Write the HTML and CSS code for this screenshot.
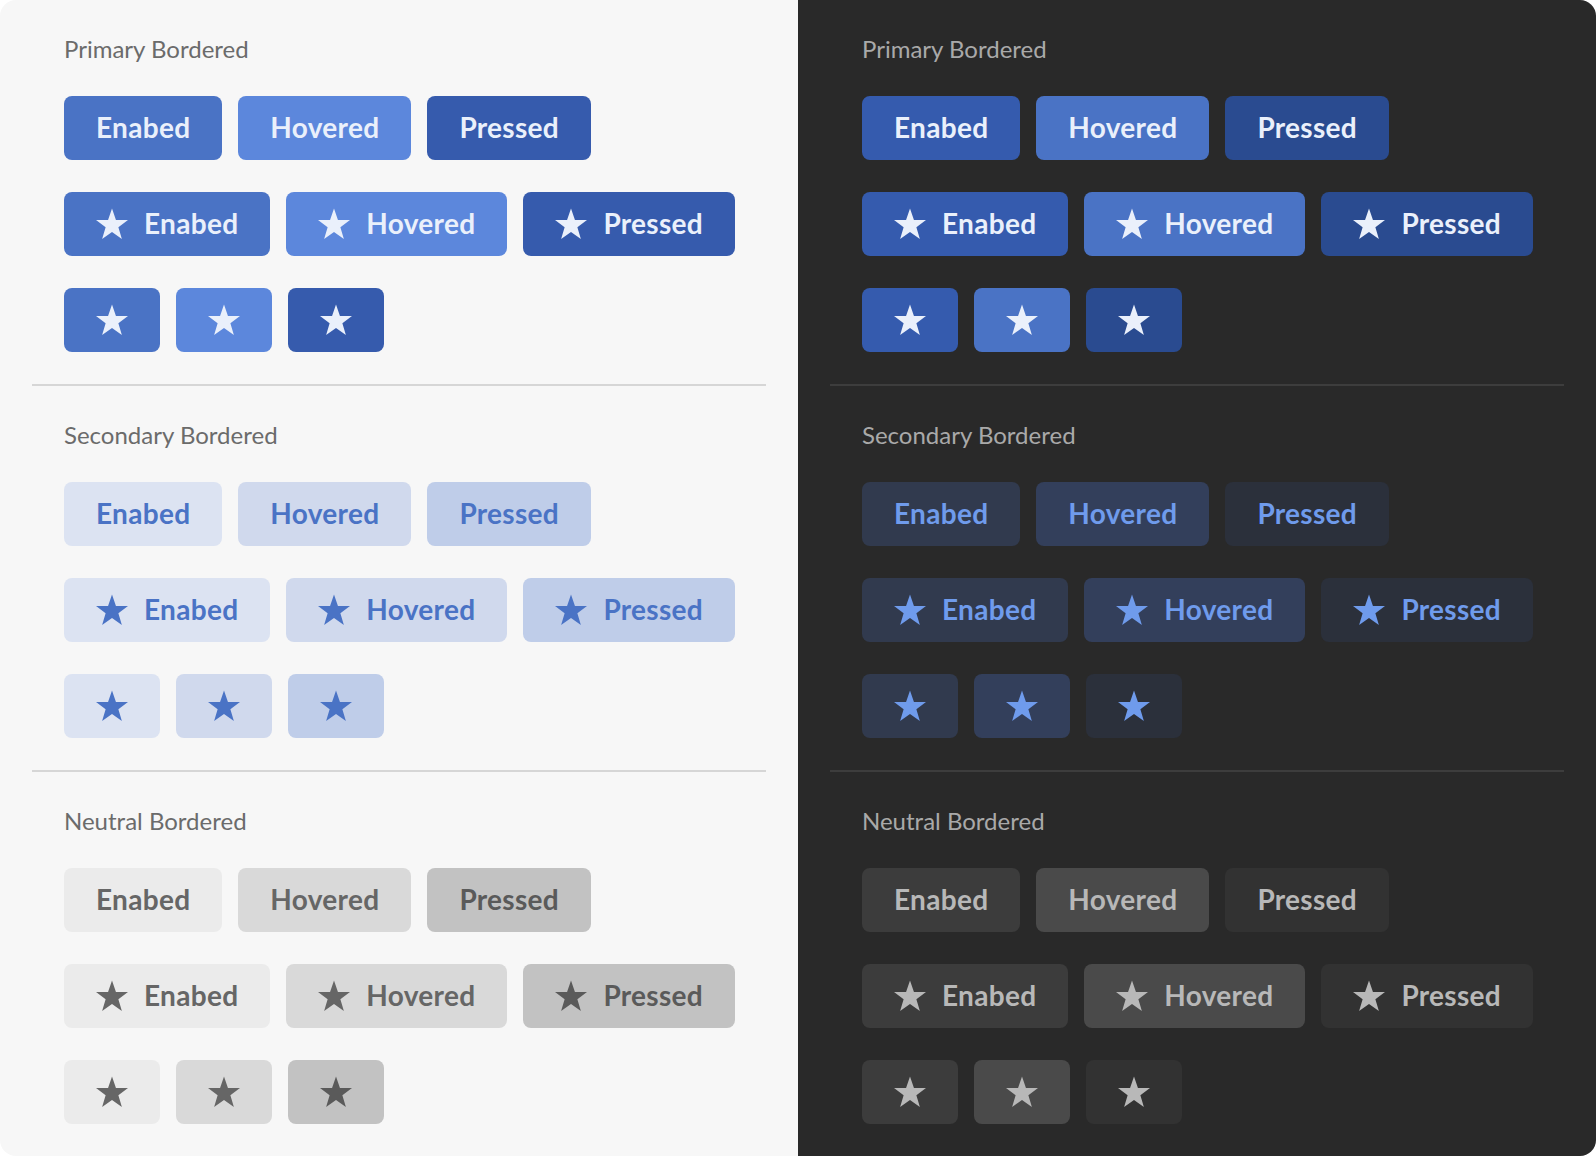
FILE: index.html
```html
<!DOCTYPE html>
<html lang="en">
<head>
  <meta charset="UTF-8" />
  <meta name="viewport" content="width=device-width, initial-scale=1.0"/>
  <title>Bordered Buttons</title>
  <link rel="stylesheet" href="styles.css">
</head>
<body>
  <svg class="sprite" xmlns="http://www.w3.org/2000/svg">
    <symbol id="star" viewBox="0 0 32 32">
      <path d="M16 0.5 L19.94 11.88 L31.98 12.11 L22.37 19.37 L25.88 30.89 L16 24 L6.12 30.89 L9.63 19.37 L0.02 12.11 L12.06 11.88 Z" fill="currentColor"/>
    </symbol>
  </svg>

  <div class="board">
    <!-- light theme -->
    <div class="panel light">
      <div class="section primary">
        <h3>Primary Bordered</h3>
        <div class="row">
          <button class="btn enabled">Enabed</button>
          <button class="btn hovered">Hovered</button>
          <button class="btn pressed">Pressed</button>
        </div>
        <div class="row">
          <button class="btn enabled"><svg class="icon"><use href="#star"/></svg>Enabed</button>
          <button class="btn hovered"><svg class="icon"><use href="#star"/></svg>Hovered</button>
          <button class="btn pressed"><svg class="icon"><use href="#star"/></svg>Pressed</button>
        </div>
        <div class="row">
          <button class="btn icon-only enabled"><svg class="icon"><use href="#star"/></svg></button>
          <button class="btn icon-only hovered"><svg class="icon"><use href="#star"/></svg></button>
          <button class="btn icon-only pressed"><svg class="icon"><use href="#star"/></svg></button>
        </div>
      </div>

      <div class="section secondary">
        <h3>Secondary Bordered</h3>
        <div class="row">
          <button class="btn enabled">Enabed</button>
          <button class="btn hovered">Hovered</button>
          <button class="btn pressed">Pressed</button>
        </div>
        <div class="row">
          <button class="btn enabled"><svg class="icon"><use href="#star"/></svg>Enabed</button>
          <button class="btn hovered"><svg class="icon"><use href="#star"/></svg>Hovered</button>
          <button class="btn pressed"><svg class="icon"><use href="#star"/></svg>Pressed</button>
        </div>
        <div class="row">
          <button class="btn icon-only enabled"><svg class="icon"><use href="#star"/></svg></button>
          <button class="btn icon-only hovered"><svg class="icon"><use href="#star"/></svg></button>
          <button class="btn icon-only pressed"><svg class="icon"><use href="#star"/></svg></button>
        </div>
      </div>

      <div class="section neutral">
        <h3>Neutral Bordered</h3>
        <div class="row">
          <button class="btn enabled">Enabed</button>
          <button class="btn hovered">Hovered</button>
          <button class="btn pressed">Pressed</button>
        </div>
        <div class="row">
          <button class="btn enabled"><svg class="icon"><use href="#star"/></svg>Enabed</button>
          <button class="btn hovered"><svg class="icon"><use href="#star"/></svg>Hovered</button>
          <button class="btn pressed"><svg class="icon"><use href="#star"/></svg>Pressed</button>
        </div>
        <div class="row">
          <button class="btn icon-only enabled"><svg class="icon"><use href="#star"/></svg></button>
          <button class="btn icon-only hovered"><svg class="icon"><use href="#star"/></svg></button>
          <button class="btn icon-only pressed"><svg class="icon"><use href="#star"/></svg></button>
        </div>
      </div>
    </div>

    <!-- dark theme -->
    <div class="panel dark">
      <div class="section primary">
        <h3>Primary Bordered</h3>
        <div class="row">
          <button class="btn enabled">Enabed</button>
          <button class="btn hovered">Hovered</button>
          <button class="btn pressed">Pressed</button>
        </div>
        <div class="row">
          <button class="btn enabled"><svg class="icon"><use href="#star"/></svg>Enabed</button>
          <button class="btn hovered"><svg class="icon"><use href="#star"/></svg>Hovered</button>
          <button class="btn pressed"><svg class="icon"><use href="#star"/></svg>Pressed</button>
        </div>
        <div class="row">
          <button class="btn icon-only enabled"><svg class="icon"><use href="#star"/></svg></button>
          <button class="btn icon-only hovered"><svg class="icon"><use href="#star"/></svg></button>
          <button class="btn icon-only pressed"><svg class="icon"><use href="#star"/></svg></button>
        </div>
      </div>

      <div class="section secondary">
        <h3>Secondary Bordered</h3>
        <div class="row">
          <button class="btn enabled">Enabed</button>
          <button class="btn hovered">Hovered</button>
          <button class="btn pressed">Pressed</button>
        </div>
        <div class="row">
          <button class="btn enabled"><svg class="icon"><use href="#star"/></svg>Enabed</button>
          <button class="btn hovered"><svg class="icon"><use href="#star"/></svg>Hovered</button>
          <button class="btn pressed"><svg class="icon"><use href="#star"/></svg>Pressed</button>
        </div>
        <div class="row">
          <button class="btn icon-only enabled"><svg class="icon"><use href="#star"/></svg></button>
          <button class="btn icon-only hovered"><svg class="icon"><use href="#star"/></svg></button>
          <button class="btn icon-only pressed"><svg class="icon"><use href="#star"/></svg></button>
        </div>
      </div>

      <div class="section neutral">
        <h3>Neutral Bordered</h3>
        <div class="row">
          <button class="btn enabled">Enabed</button>
          <button class="btn hovered">Hovered</button>
          <button class="btn pressed">Pressed</button>
        </div>
        <div class="row">
          <button class="btn enabled"><svg class="icon"><use href="#star"/></svg>Enabed</button>
          <button class="btn hovered"><svg class="icon"><use href="#star"/></svg>Hovered</button>
          <button class="btn pressed"><svg class="icon"><use href="#star"/></svg>Pressed</button>
        </div>
        <div class="row">
          <button class="btn icon-only enabled"><svg class="icon"><use href="#star"/></svg></button>
          <button class="btn icon-only hovered"><svg class="icon"><use href="#star"/></svg></button>
          <button class="btn icon-only pressed"><svg class="icon"><use href="#star"/></svg></button>
        </div>
      </div>
    </div>
  </div>
</body>
</html>
```

FILE: styles.css
```css
body {
  margin: 0;
  background: #fff;
  font-family: Lato, "Open Sans", sans-serif;
}

.sprite {
  display: none;
}

.board {
  display: flex;
  width: 1596px;
  height: 1156px;
}

.panel {
  width: 798px;
  box-sizing: border-box;
}

.panel.light {
  background: #f7f7f7;
  border-radius: 16px 0 0 16px;
}

.panel.dark {
  background: #292929;
  border-radius: 0 16px 16px 0;
}

.section {
  margin: 0 32px;
  padding: 32px;
  border-bottom: 2px solid #d6d6d6;
}

.dark .section {
  border-bottom-color: #3d3d3d;
}

.section:last-child {
  border-bottom: none;
}

h3 {
  margin: 0 0 31px;
  padding-top: 1px;
  font-size: 24px;
  font-weight: 400;
  line-height: 32px;
  color: #6b6b6b;
}

.dark h3 {
  color: #a9a9a9;
}

.row {
  display: flex;
  gap: 16px;
  margin-bottom: 32px;
}

.row:last-child {
  margin-bottom: 0;
}

.btn {
  display: inline-flex;
  align-items: center;
  justify-content: center;
  gap: 16px;
  box-sizing: border-box;
  height: 64px;
  padding: 0 32px 2px;
  border: none;
  border-radius: 8px;
  font-family: Lato, "Open Sans", sans-serif;
  font-size: 28px;
  font-weight: 700;
  letter-spacing: 0.3px;
  line-height: 1;
}

.btn .icon {
  margin-top: 2px;
}

.btn.icon-only {
  width: 96px;
  padding: 0;
}

.btn.icon-only .icon {
  margin-top: 0;
}

.icon {
  width: 32px;
  height: 32px;
  flex: none;
}

/* primary */
.light .primary .btn { color: #eaf0fb; }
.light .primary .enabled { background: #4a73c5; }
.light .primary .hovered { background: #5c87dc; }
.light .primary .pressed { background: #365bad; }

.dark .primary .btn { color: #eaf0fb; }
.dark .primary .enabled { background: #355bae; }
.dark .primary .hovered { background: #4a73c5; }
.dark .primary .pressed { background: #2a4b90; }

/* secondary */
.light .secondary .btn { color: #4a73c5; }
.light .secondary .enabled { background: #dce3f2; }
.light .secondary .hovered { background: #d0d9ed; }
.light .secondary .pressed { background: #bfcde9; }

.dark .secondary .btn { color: #6f9bec; }
.dark .secondary .enabled { background: #313a4e; }
.dark .secondary .hovered { background: #333f5b; }
.dark .secondary .pressed { background: #2b303b; }

/* neutral */
.light .neutral .btn { color: #666; }
.light .neutral .enabled { background: #ebebeb; }
.light .neutral .hovered { background: #d9d9d9; }
.light .neutral .pressed { background: #c2c2c2; color: #5a5a5a; }

.dark .neutral .btn { color: #b8b8b8; }
.dark .neutral .enabled { background: #3c3c3c; }
.dark .neutral .hovered { background: #4a4a4a; }
.dark .neutral .pressed { background: #323232; }
```
